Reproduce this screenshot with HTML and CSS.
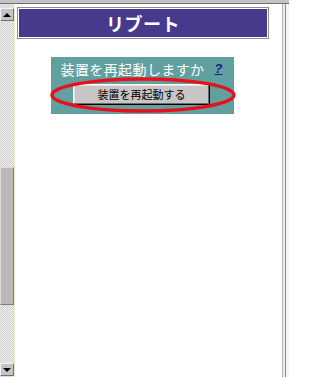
FILE: index.html
```html
<!DOCTYPE html>
<html lang="ja">
<head>
<meta charset="utf-8">
<title>リブート</title>
<link rel="stylesheet" href="styles.css">
</head>
<body>
<div class="top"></div>
<div class="main">
  <div class="scrollbar">
    <div class="sbtn up"><span class="tri-up"></span></div>
    <div class="thumb"></div>
    <div class="sfill"></div>
    <div class="sbtn down"><span class="tri-down"></span></div>
  </div>
  <div class="edge"></div>
  <div class="content">
    <div class="title-wrap">
      <div class="title">リブート</div>
    </div>
    <div class="panel">
      <div class="question">
        <span class="qtext">装置を再起動しますか</span>
        <a class="help" href="#">?</a>
      </div>
      <button class="btn" type="button">装置を再起動する</button>
      <svg class="ring" width="186" height="36" viewBox="0 0 186 36">
        <ellipse cx="93" cy="18" rx="91" ry="16" fill="none" stroke="#e8101a" stroke-width="3.4"/>
      </svg>
    </div>
  </div>
  <div class="rframe">
    <div class="rl1"></div>
    <div class="rl2"></div>
    <div class="rl3"></div>
    <div class="rl4"></div>
  </div>
</div>
</body>
</html>
```
FILE: styles.css
```css
html, body {
  margin: 0;
  padding: 0;
}
body {
  width: 289px;
  height: 377px;
  overflow: hidden;
  background: #ffffff;
  font-family: "Noto Sans CJK JP", "Noto Sans", sans-serif;
}
.top {
  height: 3px;
  background: #c4c4c4;
  border-bottom: 1px solid #6e6e6e;
}
.main {
  display: flex;
  height: 373px;
}
.scrollbar {
  width: 14px;
  display: flex;
  flex-direction: column;
  background: repeating-conic-gradient(#ececec 0 25%, #d2d2d2 0 50%) 0 0 / 2px 2px;
}
.sbtn {
  height: 13px;
  box-sizing: border-box;
  background: #c4c4c4;
  border: 1px solid;
  border-color: #f2f2f2 #707070 #707070 #f2f2f2;
  display: flex;
  align-items: center;
  justify-content: center;
}
.up {
  margin-top: 4px;
}
.down {
  margin-bottom: 1px;
}
.tri-up {
  width: 0;
  height: 0;
  border-left: 4px solid transparent;
  border-right: 4px solid transparent;
  border-bottom: 4px solid #000;
}
.tri-down {
  width: 0;
  height: 0;
  border-left: 4px solid transparent;
  border-right: 4px solid transparent;
  border-top: 4px solid #000;
}
.thumb {
  margin-top: 146px;
  height: 138px;
  box-sizing: border-box;
  background: #bdb9b9;
  border: 1px solid;
  border-color: #dcdcdc #7c7c7c #7c7c7c #dcdcdc;
}
.sfill {
  flex: 1;
}
.edge {
  width: 1px;
  background: #efe8cc;
}
.content {
  flex: 1;
  padding-left: 2px;
}
.title-wrap {
  margin-top: 3px;
  width: 252px;
  box-sizing: border-box;
  border: 1px solid #8c8c8c;
  padding: 1px;
  background: #ffffff;
}
.title {
  height: 28px;
  background: #473a8c;
  color: #ffffff;
  font-weight: bold;
  font-size: 18px;
  line-height: 28px;
  text-align: center;
  letter-spacing: 0.5px;
}
.panel {
  position: relative;
  margin-top: 18px;
  margin-left: 34px;
  width: 183px;
  height: 57px;
  background: #62a0a0;
  display: flex;
  flex-direction: column;
  align-items: center;
}
.question {
  margin-top: 3px;
  height: 18px;
  display: flex;
  align-items: center;
  gap: 8px;
}
.qtext {
  color: #ffffff;
  font-size: 14px;
  line-height: 18px;
  letter-spacing: 0.4px;
}
.help {
  color: #1c1c8e;
  font-family: "Liberation Sans", sans-serif;
  font-weight: bold;
  font-style: italic;
  font-size: 13px;
  text-decoration: underline;
  line-height: 14px;
  padding: 0 2px;
}
.btn {
  margin-top: 6px;
  margin-left: -2px;
  width: 137px;
  height: 21px;
  box-sizing: border-box;
  padding: 0;
  background: #c9c5c5;
  border: 1px solid;
  border-color: #ffffff #000000 #000000 #ffffff;
  box-shadow: inset -1px -1px #6c6c6c, inset 1px 1px #e4e4e4;
  color: #000000;
  font-family: "Noto Sans CJK JP", sans-serif;
  font-size: 11px;
  line-height: 17px;
}
.ring {
  position: absolute;
  left: -1px;
  top: 20px;
}
.rframe {
  display: flex;
  width: 7px;
}
.rl1 {
  width: 1px;
  background: #b4b4b4;
}
.rl2 {
  width: 2px;
  background: #ededed;
}
.rl3 {
  width: 1px;
  background: #8e8e8e;
}
.rl4 {
  flex: 1;
  background: #f6f6f6;
}
```
